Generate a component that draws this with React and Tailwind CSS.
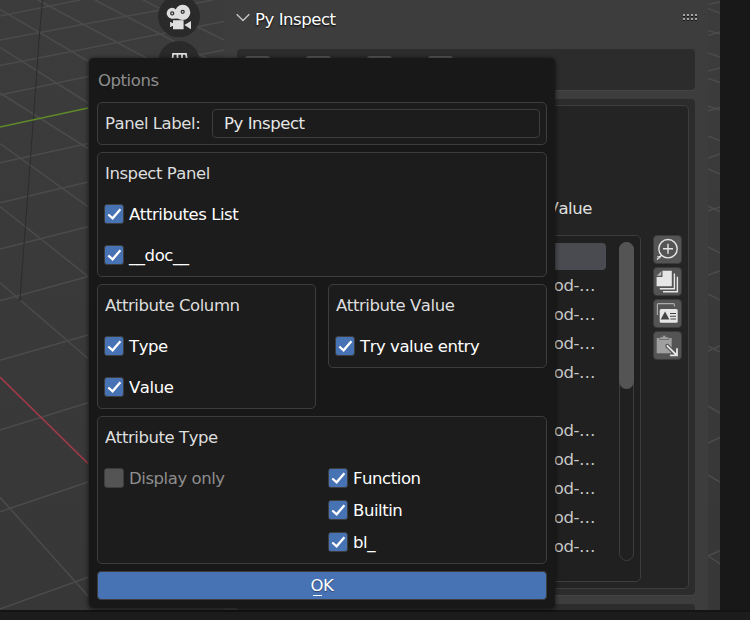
const TEXT = "font-['DejaVu_Sans','Noto_Sans',sans-serif] text-[16.5px] leading-[28px] tracking-[-0.44px] [font-kerning:none] whitespace-nowrap";

function Viewport() {
  const grid = [
    "M0 16 80 0", "M0 40 213 0", "M0 65.5 224 21.5", "M0 95 88 76.5 224 50",
    "M0 162.7 88 143.5", "M0 202.7 88 182", "M0 249 88 226.7", "M0 300.7 88 276.5",
    "M0 360.3 88 335", "M0 430 88 402.7", "M0 511.7 88 482", "M0 609 88 577.3",
    "M0 9.5 88 61", "M38 0 150 60", "M95 0 210 60", "M143 0 224 40",
    "M0 47.3 88 103", "M0 93 88 148.5", "M0 143.5 88 206.7", "M0 206.5 88 276.5",
    "M0 282.5 88 358.5", "M0 497.3 88 596",
    "M708 4.5 720 2", "M708 8.5 720 13", "M708 30.5 720 34", "M708 35.5 720 32",
    "M708 53 720 57", "M708 71 720 68", "M708 78.5 720 82.5", "M708 106 720 110",
    "M708 111 720 107.5", "M708 136 720 140.5", "M708 158 720 154", "M708 169 720 174",
    "M708 206 720 211.5", "M708 211 720 207", "M708 247 720 253", "M708 275 720 271",
    "M708 294 720 300", "M708 346 720 352", "M708 351 720 346", "M708 406 720 413",
    "M708 443 720 437.5", "M708 475 720 482", "M708 556 720 550.5", "M708 556 720 564",
  ];
  return (
    <svg className="absolute left-0 top-0" width="720" height="610" viewBox="0 0 720 610">
      <defs>
        <linearGradient id="ground" x1="0" y1="0" x2="0" y2="1">
          <stop offset="0" stopColor="#3c3c3c" />
          <stop offset="1" stopColor="#373737" />
        </linearGradient>
      </defs>
      <rect width="720" height="610" fill="url(#ground)" />
      <g stroke="#4b4b4b" strokeWidth="1.5" fill="none">
        {grid.map((d) => <path key={d} d={d} />)}
      </g>
      <path d="M42.5 0 39.7 32 33.3 120 27 205 20 298" stroke="#2c2c2c" fill="none" />
      <circle cx="20" cy="299" r="1.2" fill="none" stroke="#2a2a2a" />
      <path d="M0 127 88 108" stroke="#5f8a28" strokeWidth="1.6" />
      <path d="M0 377 88 463.5" stroke="#a03a48" strokeWidth="1.7" />
      <g fill="#282828" fillOpacity=".9">
        <circle cx="179" cy="16.3" r="21" />
        <circle cx="179" cy="62" r="21" />
      </g>
      <g fill="#dedede">
        <circle cx="172.1" cy="13.2" r="5.4" />
        <circle cx="182.7" cy="12.4" r="7.6" />
        <path d="M171 13h13v5.600h-13z" />
        <path d="M173 20.200h10.600v9H173v-3.200h-1.500v1h-1.400v-5h1.400v1h1.500zM184.300 25l6.700-4v8.200z" />
      </g>
      <g fill="#dedede" stroke="#2a2a2a" strokeWidth="1.2">
        <circle cx="172.2" cy="13.4" r="1.5" />
        <circle cx="182.7" cy="11.8" r="1.5" />
      </g>
      <path d="M172.5 60 173 53.8h13L187 60M177.5 54v6M182 54v6" fill="none" stroke="#dedede" strokeWidth="1.8" />
    </svg>
  );
}

function IconButton({ children }) {
  return (
    <div className="h-[29px] w-[29px] rounded-[4px] border border-[#3b3b3b] bg-[#545454]">
      <svg className="-ml-px -mt-px block" width="29" height="29" viewBox="0 0 29 29" fill="none">{children}</svg>
    </div>
  );
}

function ListButtons() {
  return (
    <div className="mt-[129px] ml-3 flex flex-col gap-[3px]">
      <IconButton>
        <circle cx="15" cy="13.7" r="9.2" stroke="#e6e6e6" strokeWidth="1.4" />
        <path d="M15 8.7v10M10 13.7h10M8.6 20.2 4 24.6M4.3 21.6l3.2 1" stroke="#e6e6e6" strokeWidth="1.4" />
      </IconButton>
      <IconButton>
        <path d="M9.5 3.8h9.3v15.4H3.6V10h5.9z" fill="#e6e6e6" />
        <path d="M8.3 4.2v4.6H3.7z" fill="#b5b5b5" />
        <path d="M21.4 6.5v15.2H6.8M24.4 9.7v15H10" stroke="#e6e6e6" strokeWidth="1.4" />
      </IconButton>
      <IconButton>
        <path d="M4.4 16V5.6q0-1 1-1h15q1 0 1 1v2" stroke="#aaaaaa" strokeWidth="1.2" />
        <rect x="6.7" y="10" width="18" height="13.8" rx="1.5" fill="#e6e6e6" />
        <path d="m12 12.6 4.4 8H7.7z" fill="#444444" />
        <path d="M17 14.5h6M17 17.3h6M17.5 20h5.5" stroke="#444444" strokeWidth="1.1" />
      </IconButton>
      <IconButton>
        <path d="M3.7 7h15v15.3h-15z" fill="#a0a0a0" />
        <path d="M6.7 8.5V6h3V4.4h3V6h3v2.500z" fill="#a0a0a0" stroke="#5c5c5c" strokeWidth=".7" />
        <path d="M14.300 14.800 23 23.500" stroke="#505050" strokeWidth="4" strokeLinecap="round" />
        <path d="M14.300 14.800 23.500 24M24 18v6.300h-6.300" stroke="#e6e6e6" strokeWidth="1.800" strokeLinecap="round" />
      </IconButton>
    </div>
  );
}

function Sidebar() {
  const rows = ["method-…", "method-…", "method-…", "method-…", "", "method-…", "method-…", "method-…", "method-…", "method-…"];
  return (
    <div className="absolute left-[224px] top-0 flex h-[610px] w-[484px] flex-col overflow-hidden rounded-tr-[5px] bg-[#3d3d3d] pl-[13px] pr-[13px]">
      <div className="flex h-[49px] shrink-0 items-start pt-[6px]">
        <svg className="mt-[7px] -ml-px" width="14" height="9" viewBox="0 0 14 9" fill="none" stroke="#c4c4c4" strokeWidth="1.400">
          <path d="M.7 1.200 7 7.500 13.300 1.200" />
        </svg>
        <span className={`${TEXT} ml-[5px] text-white [text-shadow:0_1px_2px_#000]`}>Py Inspect</span>
        <svg className="mt-[8px] ml-auto -mr-[2px]" width="14" height="7" viewBox="0 0 14 7" shapeRendering="crispEdges">
          {[0, 4, 8, 12].map((x) => (
            <g key={x}>
              <path d={`M${x} 0h2v2h-2zM${x} 4h2v2h-2z`} fill="#a3a3a3" />
              <path d={`M${x} 2h2v1h-2zM${x} 6h2v1h-2z`} fill="#141414" />
            </g>
          ))}
        </svg>
      </div>
      <div className="flex h-[41px] w-[458px] shrink-0 gap-9 rounded-[4px] bg-[#2c2c2c] pl-2 pt-[7px] shadow-[0_1px_0_#454545]">
        <div className="h-7 w-[25px] rounded-[3px] bg-[#545454]" />
        <div className="h-7 w-[25px] rounded-[3px] bg-[#545454]" />
        <div className="h-7 w-[25px] rounded-[3px] bg-[#545454]" />
        <div className="h-7 w-[25px] rounded-[3px] bg-[#545454]" />
      </div>
      <div className="mt-[9px] h-[496px] w-[458px] shrink-0 rounded-[4px] bg-[#2c2c2c] px-[6px] pt-[6px] shadow-[0_1px_0_#454545]">
        <div className="flex h-[484px] rounded-[5px] border border-[#3d3d3d] bg-[#242424] pl-[7px]">
          <div className="w-[390px]">
            <div className={`${TEXT} mt-[89px] mb-[12px] pr-[49px] text-right text-[#e0e0e0]`}>Value</div>
            <div className="flex h-[347px] justify-between rounded-[5px] border border-[#3d3d3d] bg-[#202020] pl-[7px] pr-[6px] pt-[6px]">
              <div className="w-[347px] pt-px">
                <div className="mb-px h-[27px] rounded-[4px] bg-[#4a4b50]" />
                {rows.map((text, i) => (
                  <div key={i} className={`${TEXT} h-[29px] pr-[11px] pt-px text-right text-[#c8c8c8]`}>{text}</div>
                ))}
              </div>
              <div className="h-[319px] w-[15px] rounded-full border border-[#3d3d3d]">
                <div className="-ml-px -mt-px h-[147px] w-[15px] rounded-full bg-[#545454]" />
              </div>
            </div>
          </div>
          <ListButtons />
        </div>
      </div>
      <div className="mt-[9px] h-5 w-[458px] shrink-0 rounded-[4px] bg-[#2c2c2c]" />
    </div>
  );
}

function Check({ label, on = true }) {
  return (
    <div className="-ml-px flex h-7 items-center">
      <span className={`mr-[5px] block h-5 w-5 shrink-0 rounded-[3px] border border-[#3d3d3d] ${on ? "bg-[#4772b3]" : "bg-[#545454]"}`}>
        {on && (
          <svg className="-ml-px -mt-px block" width="20" height="20" viewBox="0 0 20 20" fill="none" stroke="#fff" strokeWidth="2.3">
            <path d="M4.300 10.500 8.600 14.300 16.400 5.300" />
          </svg>
        )}
      </span>
      <span className={`${TEXT} pt-0.5 ${on ? "text-white" : "text-[#8e8e8e]"}`}>{label}</span>
    </div>
  );
}

function Box({ title, className = "", children }) {
  return (
    <div className={`rounded-[5px] border border-[#3d3d3d] bg-[#1c1c1c] px-[7px] pt-[6px] ${className}`}>
      {title && <div className={`${TEXT} mb-3 pt-px text-[#dedede]`}>{title}</div>}
      {children}
    </div>
  );
}

function OptionsDialog() {
  return (
    <div className="absolute left-[89px] top-[58px] flex h-[550px] w-[466px] flex-col gap-[7px] rounded-[5px] bg-[#181818] px-2 pt-2 shadow-[0_1px_4px_1px_rgba(0,0,0,0.5)]">
      <div className={`${TEXT} pl-px pt-px text-[#8e8e8e]`}>Options</div>
      <Box className="flex h-[43px]">
        <span className={`${TEXT} w-[107px] shrink-0 pt-px text-[#dedede]`}>Panel Label:</span>
        <div className={`${TEXT} h-[29px] w-[328px] shrink-0 rounded-[4px] border border-[#3d3d3d] bg-[#1c1c1c] pl-[11px] text-[#e6e6e6]`}>Py Inspect</div>
      </Box>
      <Box title="Inspect Panel" className="h-[125px]">
        <div className="flex flex-col gap-[13px]">
          <Check label="Attributes List" />
          <Check label="__doc__" />
        </div>
      </Box>
      <div className="flex items-start justify-between">
        <Box title="Attribute Column" className="h-[125px] w-[219px]">
          <div className="flex flex-col gap-[13px]">
            <Check label="Type" />
            <Check label="Value" />
          </div>
        </Box>
        <Box title="Attribute Value" className="h-[84px] w-[219px]">
          <Check label="Try value entry" />
        </Box>
      </div>
      <Box title="Attribute Type" className="h-[148px]">
        <div className="flex">
          <div className="w-[224px]">
            <Check label="Display only" on={false} />
          </div>
          <div className="flex flex-col gap-1">
            <Check label="Function" />
            <Check label="Builtin" />
            <Check label="bl_" />
          </div>
        </div>
      </Box>
      <div className={`${TEXT} h-[29px] rounded-[4px] border border-[#3d3d3d] bg-[#4772b3] text-center text-white [text-shadow:0_1px_1px_rgba(0,0,0,0.4)]`}>
        <span className="relative">
          O
          <span className="absolute bottom-[-1px] left-[2px] h-px w-[9px] bg-white" />
        </span>K
      </div>
    </div>
  );
}

export default function App() {
  return (
    <div className="relative h-[620px] w-[750px] overflow-hidden bg-[#181818]">
      <Viewport />
      <Sidebar />
      <div className="absolute bottom-0 left-0 h-[10px] w-[750px] border-t-2 border-[#141414] bg-[#1c1c1c]" />
      <OptionsDialog />
    </div>
  );
}
